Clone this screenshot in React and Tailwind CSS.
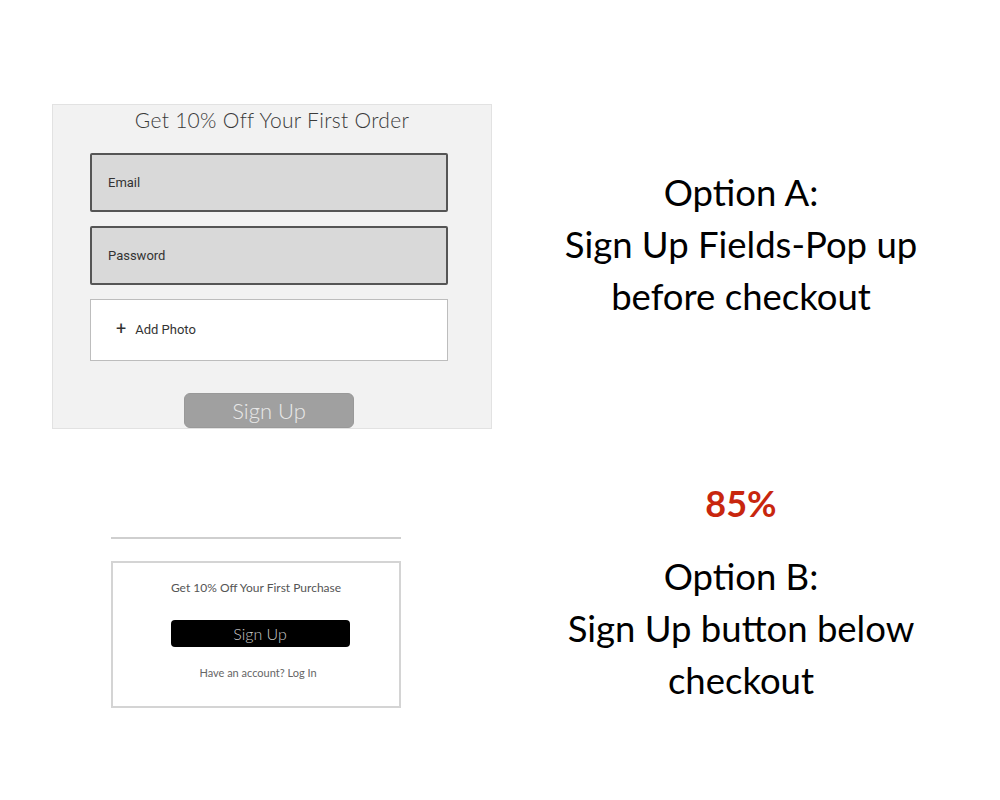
import React from "react";

export default function App() {
  return (
    <div className="w-[1000px] h-[800px] bg-white flex">
      {/* Left column */}
      <div className="w-[492px] shrink-0 flex flex-col pl-[52px] pt-[104px]">
        <div className="w-[440px] h-[325px] bg-[#f2f2f2] border border-[#e2e2e2] flex flex-col items-center">
          <div className="mt-[2px] h-[26px] leading-[26px] text-[21px] text-[#3a3a3a] font-['Lato',sans-serif] font-light tracking-[0.3px]">
            Get 10% Off Your First Order
          </div>
          <div className="mt-[20px] w-[358px] flex flex-col gap-[14px] self-start ml-[37px]">
            <div className="h-[59px] bg-[#d9d9d9] border-2 border-[#555] rounded-[2px] flex items-center pl-[16px] text-[13px] text-[#333] font-['Roboto',sans-serif]">
              Email
            </div>
            <div className="h-[59px] bg-[#d9d9d9] border-2 border-[#555] rounded-[2px] flex items-center pl-[16px] text-[13px] text-[#333] font-['Roboto',sans-serif]">
              Password
            </div>
            <div className="h-[62px] bg-white border border-[#bdbdbd] flex items-center pl-[25px] text-[13px] text-[#333] font-['Roboto',sans-serif]">
              <span className="text-[18px] leading-none mr-[9px] -mt-[2px]">+</span>
              Add Photo
            </div>
          </div>
          <div className="mt-auto w-[170px] h-[35px] bg-[#a0a0a0] rounded-[6px] border border-[#999] flex items-center justify-center text-[22px] text-[#e8e8e8] font-['Lato',sans-serif] font-light -translate-x-[3px]">
            Sign Up
          </div>
        </div>

        <div className="mt-[108px] ml-[59px] w-[290px] h-[2px] bg-[#cfcfcf]" />

        <div className="mt-[22px] ml-[59px] w-[290px] h-[147px] border-2 border-[#d4d4d4] flex flex-col items-center">
          <div className="mt-[16px] text-[12px] text-[#555] font-['Lato',sans-serif]">
            Get 10% Off Your First Purchase
          </div>
          <div className="mt-[23px] w-[179px] h-[27px] bg-black rounded-[4px] flex items-center justify-center text-[16px] text-[#c8c8c8] font-['Lato',sans-serif] font-light translate-x-[4px]">
            Sign Up
          </div>
          <div className="mt-[18px] text-[11px] text-[#666] font-['Lato',sans-serif] translate-x-[2px]">
            Have an account? Log In
          </div>
        </div>
      </div>

      {/* Right column */}
      <div className="flex-1 pr-[10px] flex flex-col items-center text-center font-['Lato',sans-serif] text-black">
        <div className="mt-[166px] text-[36.5px] leading-[52px]">
          <div>Option A:</div>
          <div>Sign Up Fields-Pop up</div>
          <div>before checkout</div>
        </div>
        <div className="mt-[155px] text-[36px] leading-[52px] font-bold text-[#c8260e]">85%</div>
        <div className="mt-[21px] text-[36.5px] leading-[52px]">
          <div>Option B:</div>
          <div>Sign Up button below</div>
          <div>checkout</div>
        </div>
      </div>
    </div>
  );
}
